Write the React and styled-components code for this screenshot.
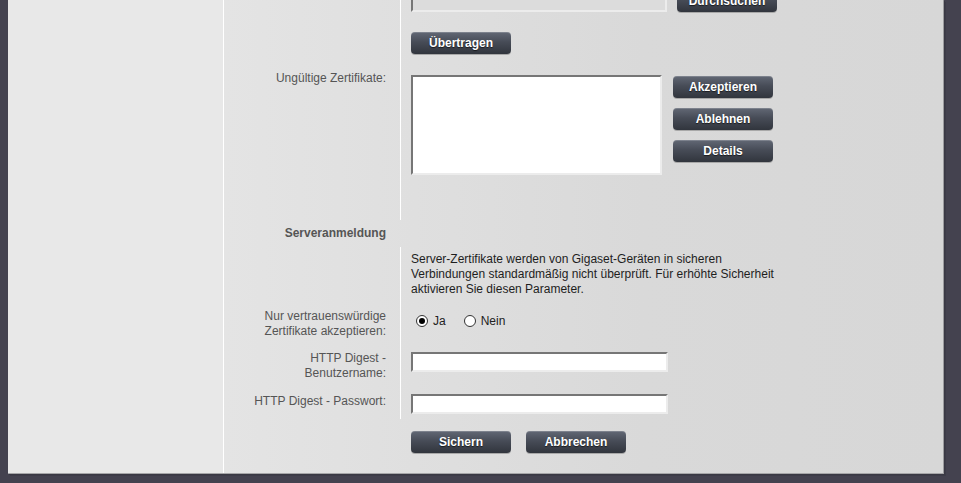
import React from "react";
import styled, { createGlobalStyle } from "styled-components";

const GlobalStyle = createGlobalStyle`
  html, body {
    margin: 0;
    padding: 0;
    background: #44424f;
    font-family: "Liberation Sans", Arial, sans-serif;
    font-size: 12px;
    overflow: hidden;
  }
`;

const Page = styled.div`
  height: 483px;
  padding-left: 8px;
  box-sizing: border-box;
`;

const Panel = styled.div`
  width: 936px;
  height: 474px;
  display: flex;
  overflow: hidden;
  box-sizing: border-box;
  border-right: 1px solid #9c9c9f;
  border-bottom: 1px solid #a6a6a8;
  box-shadow: 1px 1px 0 #3a3944, 2px 2px 0 #3d3c48;
`;

const NavColumn = styled.div`
  width: 215px;
  flex: none;
  background: #e8e8e8;
  border-right: 1px solid #ffffff;
`;

const Content = styled.div`
  flex: 1;
  background: linear-gradient(to right, #e4e4e4 0px, #d9d9d9 420px, #d7d7d7 100%);
`;

const Form = styled.div`
  margin-top: -14px;
`;

const Row = styled.div`
  display: grid;
  grid-template-columns: 177px 1fr;
  height: ${p => p.$h}px;
`;

const Label = styled.div`
  box-sizing: border-box;
  border-right: 1px solid ${p => (p.$noLine ? "transparent" : "#ffffff")};
  padding: ${p => p.$top || 0}px 14px 0 22px;
  text-align: right;
  color: #555555;
  line-height: 15px;
  font-weight: ${p => (p.$bold ? "bold" : "normal")};
`;

const Value = styled.div`
  padding: ${p => p.$top || 0}px 0 0 10px;
  display: flex;
  align-items: flex-start;
  gap: ${p => p.$gap || 0}px;
  color: #222222;
`;

const Button = styled.button`
  width: 100px;
  height: 22px;
  flex: none;
  padding: 0;
  border: none;
  border-radius: 4px;
  background: linear-gradient(to bottom, #626875 0%, #474c57 45%, #31353d 100%);
  box-shadow: inset 0 1px 0 rgba(255, 255, 255, 0.18), 0 1px 0 #a8a8a8;
  color: #ffffff;
  font-family: "Liberation Sans", Arial, sans-serif;
  font-size: 12px;
  font-weight: bold;
  text-shadow: 0 1px 1px rgba(0, 0, 0, 0.6);
  cursor: pointer;
`;

const Field = styled.div`
  box-sizing: border-box;
  width: ${p => p.$w}px;
  height: ${p => p.$hgt}px;
  margin-top: ${p => p.$mt || 0}px;
  flex: none;
  background: ${p => (p.$disabled ? "#dcdcdc" : "#ffffff")};
  border-top: 2px solid #767676;
  border-left: 2px solid #767676;
  border-right: 2px solid #ececec;
  border-bottom: 2px solid #ececec;
`;

const ButtonStack = styled.div`
  display: flex;
  flex-direction: column;
  gap: 10px;
  margin-top: 1px;
`;

const Description = styled.p`
  margin: 0;
  width: 372px;
  line-height: 15px;
  color: #1e1e1e;
`;

const RadioGroup = styled.label`
  display: flex;
  align-items: center;
  gap: 5px;
  color: #222222;
  margin-left: ${p => p.$ml}px;
`;

const RadioDot = styled.span`
  box-sizing: border-box;
  width: 12px;
  height: 12px;
  border-radius: 50%;
  border: 1px solid #333333;
  background: #ffffff;
  display: flex;
  align-items: center;
  justify-content: center;
  &::after {
    content: "";
    width: 6px;
    height: 6px;
    border-radius: 50%;
    background: ${p => (p.$on ? "#000000" : "transparent")};
  }
`;

export default function App() {
  return (
    <Page>
      <GlobalStyle />
      <Panel>
        <NavColumn />
        <Content>
          <Form>
            <Row $h={36}>
              <Label />
              <Value $top={4} $gap={10}>
                <Field $w={256} $hgt={20} $mt={2} $disabled />
                <Button>Durchsuchen</Button>
              </Value>
            </Row>
            <Row $h={42}>
              <Label />
              <Value $top={10}>
                <Button>Übertragen</Button>
              </Value>
            </Row>
            <Row $h={156}>
              <Label $top={7}>Ungültige Zertifikate:</Label>
              <Value $top={11} $gap={11}>
                <Field $w={251} $hgt={100} />
                <ButtonStack>
                  <Button>Akzeptieren</Button>
                  <Button>Ablehnen</Button>
                  <Button>Details</Button>
                </ButtonStack>
              </Value>
            </Row>
            <Row $h={27}>
              <Label $top={6} $noLine $bold>
                Serveranmeldung
              </Label>
              <Value />
            </Row>
            <Row $h={53}>
              <Label />
              <Value $top={5}>
                <Description>
                  Server-Zertifikate werden von Gigaset-Geräten in sicheren
                  Verbindungen standardmäßig nicht überprüft. Für erhöhte
                  Sicherheit aktivieren Sie diesen Parameter.
                </Description>
              </Value>
            </Row>
            <Row $h={44}>
              <Label $top={9}>Nur vertrauenswürdige Zertifikate akzeptieren:</Label>
              <Value $top={14}>
                <RadioGroup $ml={5}>
                  <RadioDot $on />
                  Ja
                </RadioGroup>
                <RadioGroup $ml={18}>
                  <RadioDot />
                  Nein
                </RadioGroup>
              </Value>
            </Row>
            <Row $h={42}>
              <Label $top={7}>HTTP Digest - Benutzername:</Label>
              <Value $top={8}>
                <Field $w={257} $hgt={20} />
              </Value>
            </Row>
            <Row $h={33}>
              <Label $top={8}>HTTP Digest - Passwort:</Label>
              <Value $top={8}>
                <Field $w={257} $hgt={20} />
              </Value>
            </Row>
            <Row $h={60}>
              <Label $noLine />
              <Value $top={12} $gap={15}>
                <Button>Sichern</Button>
                <Button>Abbrechen</Button>
              </Value>
            </Row>
          </Form>
        </Content>
      </Panel>
    </Page>
  );
}
